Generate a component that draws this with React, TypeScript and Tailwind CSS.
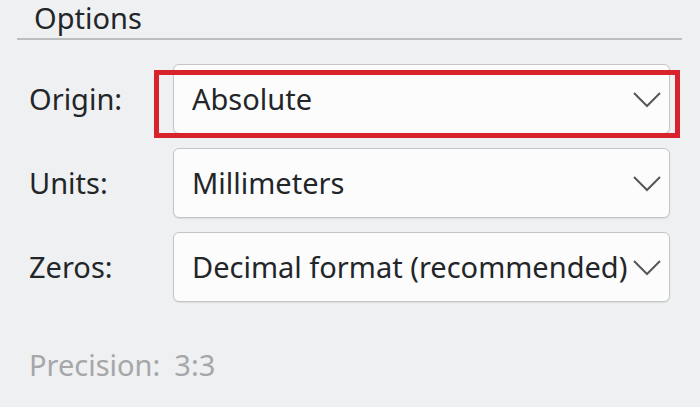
const rows = [
  { label: 'Origin:', value: 'Absolute', highlight: true },
  { label: 'Units:', value: 'Millimeters', highlight: false },
  { label: 'Zeros:', value: 'Decimal format (recommended)', highlight: false },
]

function Chevron() {
  return (
    <svg width="28" height="17" viewBox="0 0 28 17" className="shrink-0">
      <polyline points="1,2 14,15 27,2" fill="none" stroke="#55575a" strokeWidth="2" />
    </svg>
  )
}

export default function App() {
  return (
    <div className="w-[700px] h-[407px] bg-[#eff0f1] text-[#232629] font-['Noto_Sans',sans-serif] text-[29px] overflow-hidden">
      <div className="pl-[34px] leading-[36px]">Options</div>
      <div className="ml-[17px] mt-[2px] w-[665px] h-[2px] bg-[#bdbec0]" />

      <div className="mt-[24px] pl-[29px] flex flex-col gap-[14px]">
        {rows.map((row) => (
          <div key={row.label} className="relative flex items-center">
            <div className="w-[144px] leading-[36px]">{row.label}</div>
            <div className="w-[497px] h-[70px] flex items-center justify-between pl-[18px] pr-[8px] bg-[#fcfcfc] border border-[#c3c5c7] rounded-[6px] shadow-[0_1px_1px_rgba(0,0,0,0.08)]">
              <span className="leading-[36px] whitespace-nowrap">{row.value}</span>
              <Chevron />
            </div>
            {row.highlight && (
              <div className="absolute left-[125px] top-[6px] w-[526px] h-[68px] border-[5px] border-[#d8232c] pointer-events-none" />
            )}
          </div>
        ))}
      </div>

      <div className="mt-[45px] pl-[29px] flex gap-[14px] leading-[36px] text-[#a5a7a9]">
        <span>Precision:</span>
        <span>3:3</span>
      </div>
    </div>
  )
}
